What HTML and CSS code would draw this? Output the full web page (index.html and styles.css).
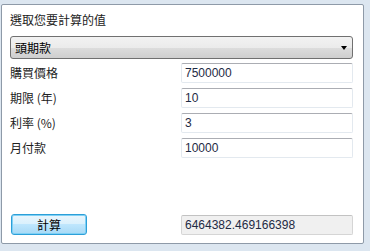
FILE: index.html
```
<!DOCTYPE html>
<html lang="zh-Hant">
<head>
    <meta charset="UTF-8">
    <title>計算</title>
    <link rel="stylesheet" href="styles.css">
</head>
<body>
    <div class="panel">
        <div class="title">選取您要計算的值</div>
        <div class="select">
            <span>頭期款</span>
            <span class="arrow"></span>
        </div>
        <div class="fields">
            <label>購買價格</label>
            <div class="field">7500000</div>
            <label>期限 (年)</label>
            <div class="field">10</div>
            <label>利率 (%)</label>
            <div class="field">3</div>
            <label>月付款</label>
            <div class="field">10000</div>
        </div>
        <div class="footer">
            <button class="calc">計算</button>
            <div class="field result">6464382.469166398</div>
        </div>
    </div>
</body>
</html>
```

FILE: styles.css
```
* {
    margin: 0;
    padding: 0;
    box-sizing: border-box;
}

body {
    background-color: #dce6f0;
    font-family: "Noto Sans CJK TC", "Liberation Sans", sans-serif;
    font-size: 12px;
    color: #222;
    width: 370px;
    height: 251px;
    overflow: hidden;
}

.panel {
    margin: 4px 0 0 1px;
    width: 363px;
    height: 240px;
    background: #fff;
    border: 1px solid #8e9aa8;
    border-radius: 2px;
    padding: 7px 10px 8px 8px;
    display: flex;
    flex-direction: column;
}

.title {
    line-height: 16px;
    height: 16px;
}

.select {
    margin-top: 8px;
    height: 23px;
    border: 1px solid #707070;
    border-radius: 3px;
    background: linear-gradient(#f2f2f2 0%, #ebebeb 50%, #dddddd 50%, #cfcfcf 100%);
    display: flex;
    align-items: center;
    justify-content: space-between;
    padding: 0 5px 0 4px;
    line-height: 16px;
    color: #000;
}

.arrow {
    width: 0;
    height: 0;
    border-left: 3.5px solid transparent;
    border-right: 3.5px solid transparent;
    border-top: 4px solid #000;
    margin-top: 1px;
}

.fields {
    margin-top: 4px;
    display: grid;
    grid-template-columns: 171px 1fr;
    row-gap: 5px;
    align-items: center;
}

.fields label {
    line-height: 16px;
}

.field {
    height: 20px;
    border: 1px solid #e3e9ef;
    border-top-color: #abadb3;
    border-radius: 2px;
    padding: 0 3px;
    line-height: 18px;
    font-family: "Liberation Sans", "DejaVu Sans", sans-serif;
    font-size: 12px;
    color: #1e2a44;
    background: #fff;
}

.footer {
    margin-top: auto;
    display: grid;
    grid-template-columns: 171px 1fr;
    align-items: center;
}

.calc {
    margin-left: 1px;
    width: 76px;
    height: 21px;
    border: 1px solid #2c9fd8;
    border-radius: 3px;
    box-shadow: inset 0 0 0 1px #7fd0f5;
    background: linear-gradient(#eaf6fd 0%, #d9f0fc 50%, #bee6fd 50%, #a7d9f5 100%);
    font-family: "Noto Sans CJK TC", sans-serif;
    font-size: 12px;
    color: #000;
    line-height: 17px;
}

.result {
    background: #f0f0f0;
    border-color: #d5d5d5;
    border-top-color: #c2c2c2;
}
```
